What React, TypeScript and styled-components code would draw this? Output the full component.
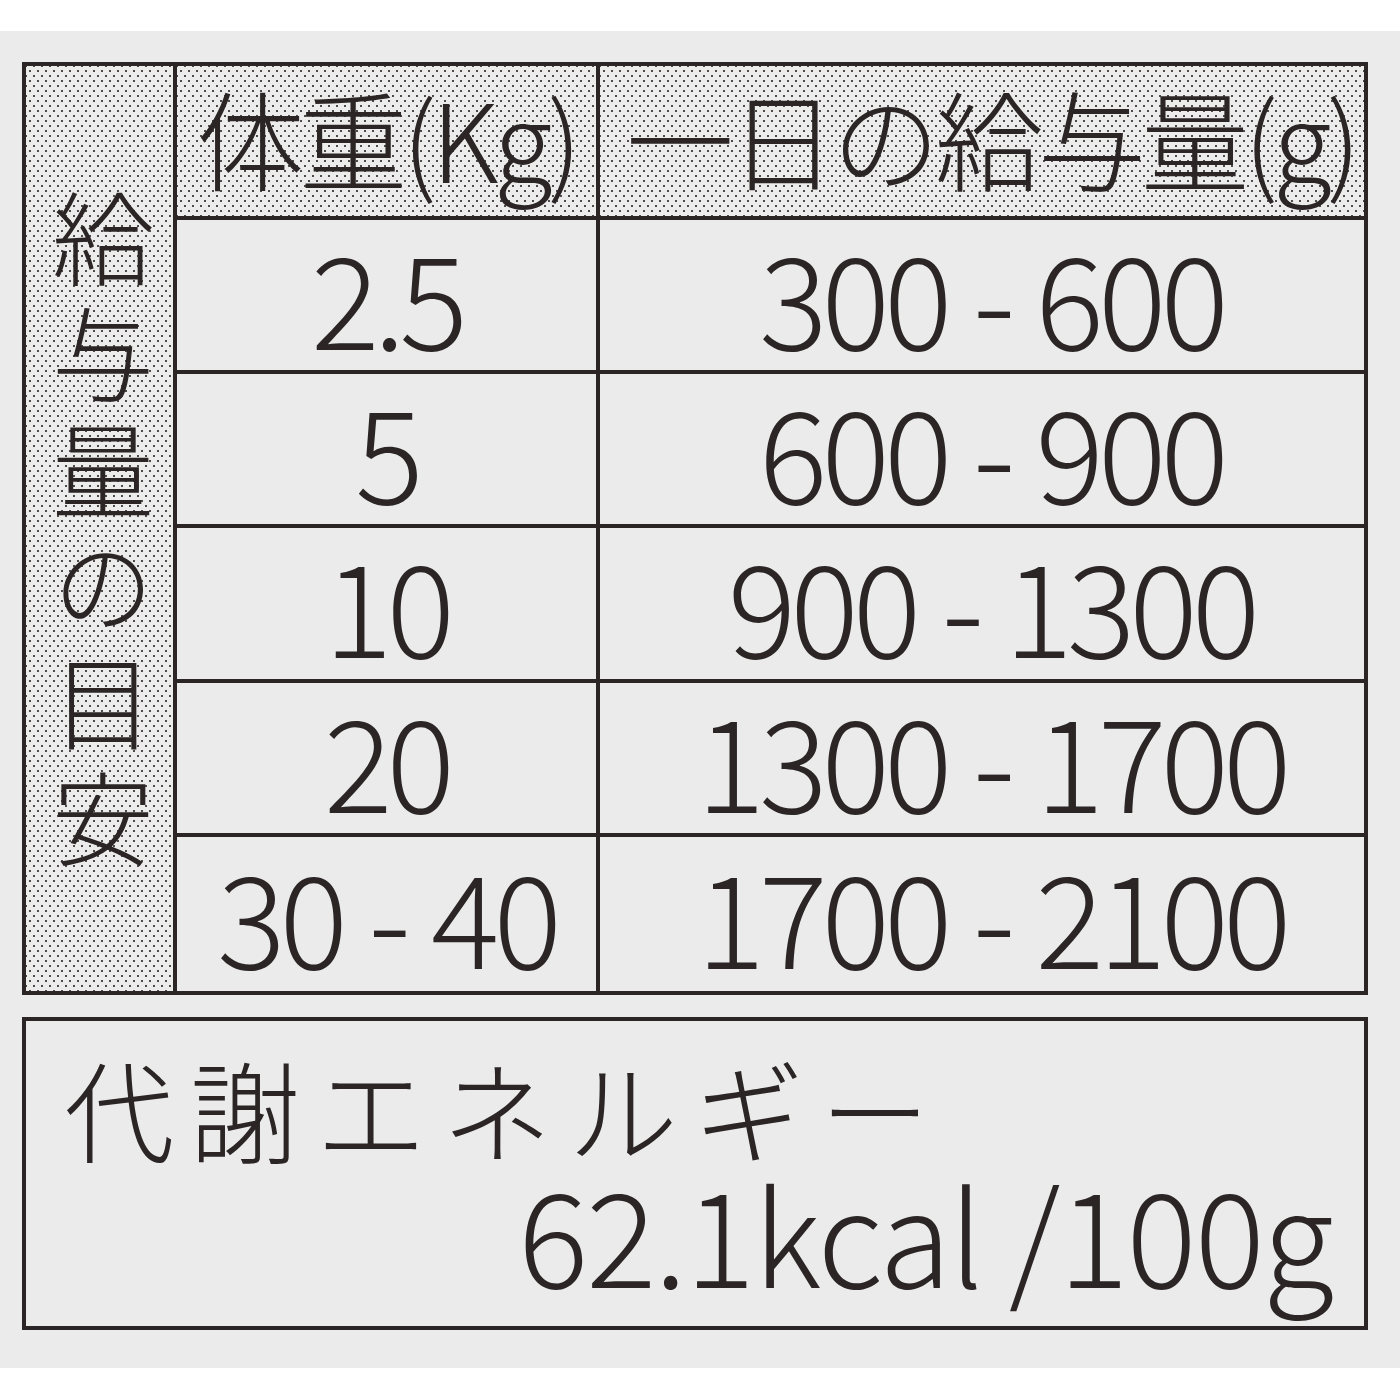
import styled, { createGlobalStyle } from 'styled-components';

const GlobalStyle = createGlobalStyle`
	html, body {
		margin: 0;
		padding: 0;
		background: #ffffff;
	}
	body {
		font-family: "Noto Sans CJK JP", "Noto Sans", sans-serif;
		color: #2b2526;
	}
`;

const ink = '#2b2526';

const Page = styled.div`
	width: 1400px;
	height: 1400px;
	padding-top: 31px;
	box-sizing: border-box;
	background: #ffffff;
`;

const Paper = styled.div`
	height: 1337px;
	box-sizing: border-box;
	padding: 31px 32px 0 22px;
	background: #ebebeb;
	display: flex;
	flex-direction: column;
	gap: 22px;
`;

const Table = styled.div`
	width: 1346px;
	height: 933px;
	box-sizing: border-box;
	border: 4px solid ${ink};
	display: grid;
	grid-template-columns: 151px 423px 1fr;
	grid-template-rows: 154px repeat(5, 1fr);
`;

// halftone screen printed behind the header cells
const dots = `
	background-color: #ececec;
	background-image:
		radial-gradient(circle, #4f4a4a 0.9px, transparent 1.5px),
		radial-gradient(circle, #4f4a4a 0.9px, transparent 1.5px);
	background-size: 8px 10px, 8px 10px;
	background-position: 0 0, 4px 5px;
`;

const SideLabel = styled.div`
	${dots};
	grid-row: 1 / 7;
	grid-column: 1;
	border-right: 4px solid ${ink};
	display: flex;
	align-items: center;
	justify-content: center;
	padding: 16px 0 0 6px;
	writing-mode: vertical-rl;
	font-size: 102px;
	font-weight: 300;
	letter-spacing: 14px;
	line-height: 1;
`;

const Cell = styled.div<{ $head?: boolean; $last?: boolean; $divider?: boolean }>`
	${(p) => (p.$head ? dots : '')};
	display: flex;
	align-items: center;
	justify-content: center;
	box-sizing: border-box;
	border-bottom: ${(p) => (p.$last ? 'none' : `4px solid ${ink}`)};
	border-right: ${(p) => (p.$divider ? `4px solid ${ink}` : 'none')};
	font-size: ${(p) => (p.$head ? '108px' : '128px')};
	font-weight: 300;
	letter-spacing: ${(p) => (p.$head ? '-5px' : '-6px')};
	word-spacing: ${(p) => (p.$head ? '0' : '4px')};
	line-height: 1;
	white-space: nowrap;
	padding-bottom: ${(p) => (p.$head ? '10px' : '0')};
	padding-left: ${(p) => (p.$divider ? '0' : '18px')};
`;

const EnergyBox = styled.div`
	width: 1346px;
	height: 313px;
	box-sizing: border-box;
	border: 4px solid ${ink};
	padding: 31px 32px 0 38px;
	display: flex;
	flex-direction: column;
`;

const EnergyTitle = styled.div`
	font-size: 110px;
	font-weight: 300;
	letter-spacing: 16px;
	line-height: 1;
	white-space: nowrap;
`;

const EnergyValue = styled.div`
	align-self: flex-end;
	font-size: 131px;
	font-weight: 300;
	letter-spacing: -2px;
	line-height: 1;
	margin-top: 4px;
	white-space: nowrap;
`;

const rows: [string, string][] = [
	['2.5', '300 - 600'],
	['5', '600 - 900'],
	['10', '900 - 1300'],
	['20', '1300 - 1700'],
	['30 - 40', '1700 - 2100'],
];

export default function App() {
	return (
		<Page>
			<GlobalStyle />
			<Paper>
				<Table>
					<SideLabel>給与量の目安</SideLabel>
					<Cell $head $divider>体重(Kg)</Cell>
					<Cell $head>一日の給与量(g)</Cell>
					{rows.flatMap(([weight, amount], i) => [
						<Cell key={`w${i}`} $divider $last={i === rows.length - 1}>
							{weight}
						</Cell>,
						<Cell key={`a${i}`} $last={i === rows.length - 1}>
							{amount}
						</Cell>,
					])}
				</Table>
				<EnergyBox>
					<EnergyTitle>代謝エネルギー</EnergyTitle>
					<EnergyValue>62.1kcal /100g</EnergyValue>
				</EnergyBox>
			</Paper>
		</Page>
	);
}
